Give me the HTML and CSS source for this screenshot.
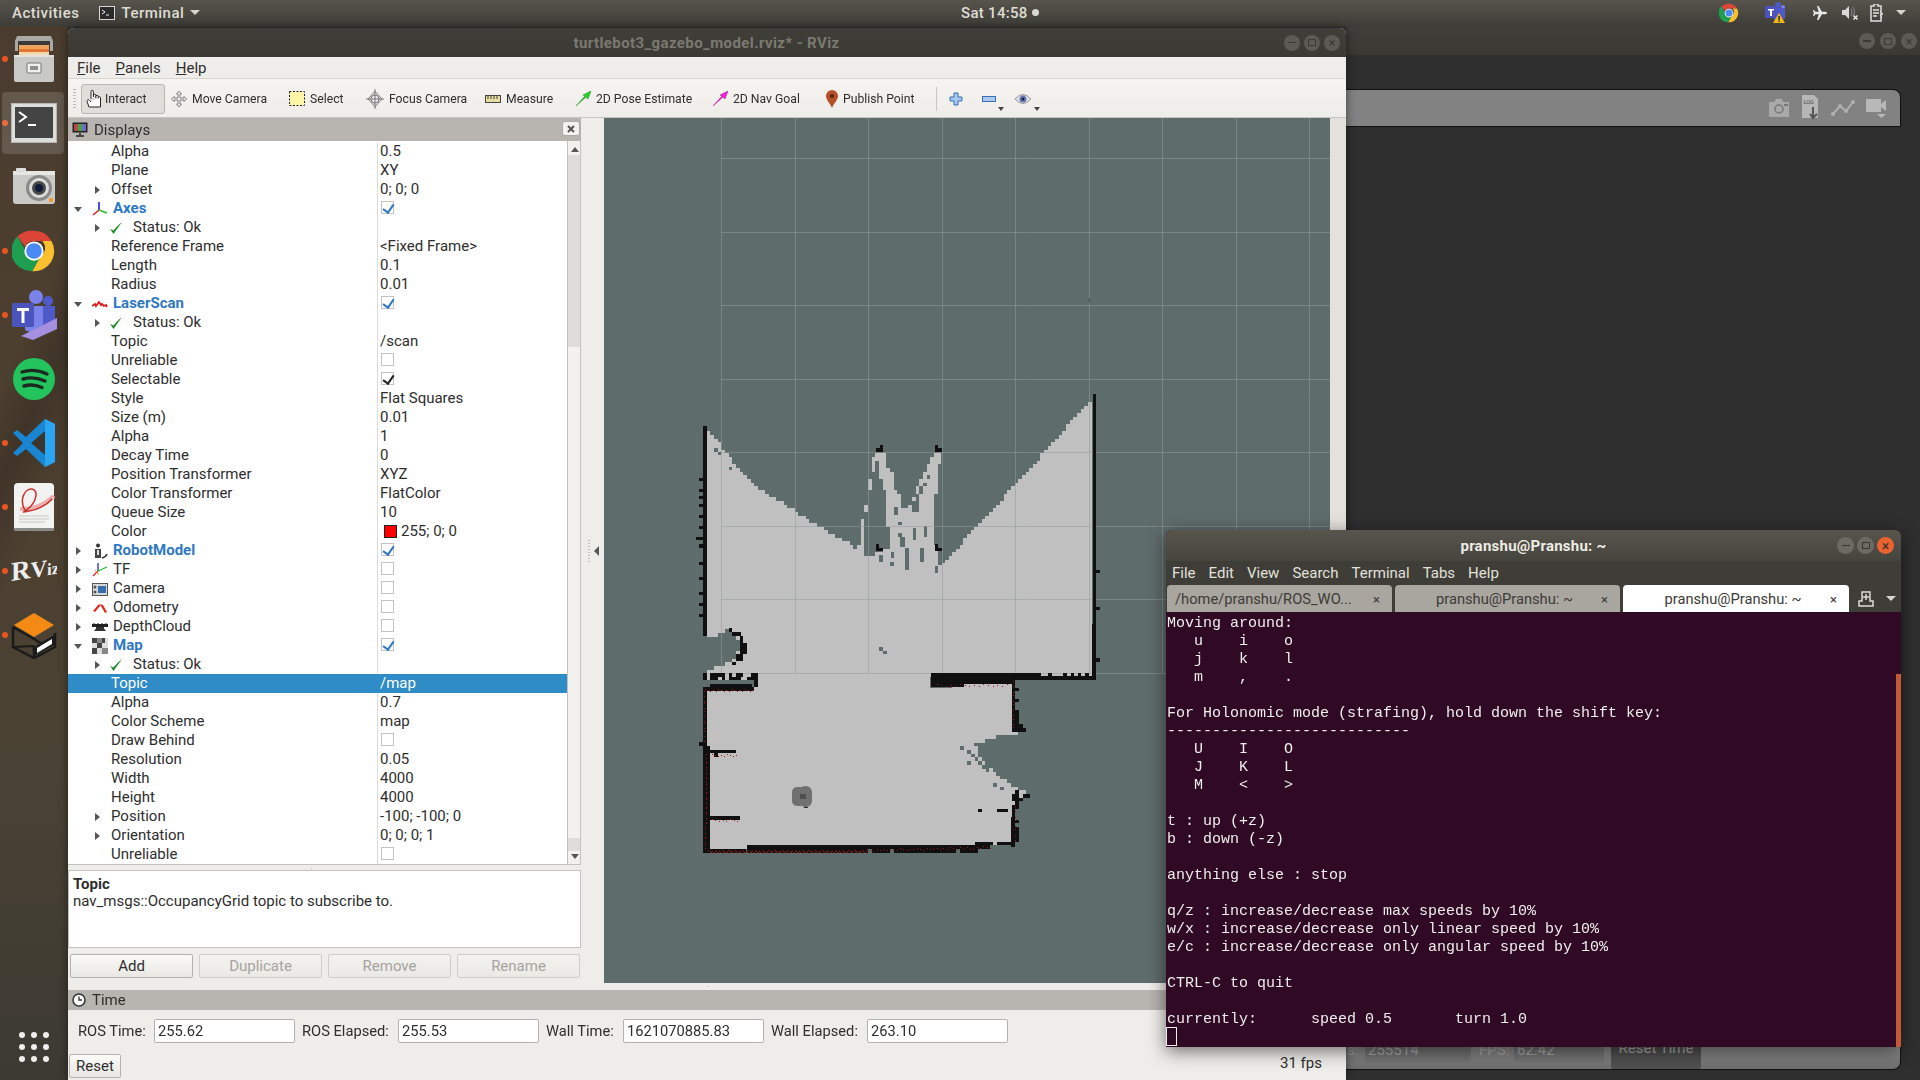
FILE: index.html
```html
<!DOCTYPE html>
<html lang="en">
<head>
  <meta charset="UTF-8" />
  <title>turtlebot3_gazebo_model.rviz* - RViz</title>
  <link rel="stylesheet" href="styles.css">
</head>
<body>
  <!-- Top panel -->
  <header class="topbar">
    <span class="activities">Activities</span>
    <span class="app-menu">
      <svg width="16" height="14" viewBox="0 0 16 14"><rect x="0.5" y="0.5" width="15" height="13" fill="#2b2b2b" stroke="#d8d8d8"/><path d="M3 4l3 2-3 2M7 9h3" fill="none" stroke="#eee"/></svg>
      Terminal
      <i class="caret"></i>
    </span>
    <span class="clock">Sat 14:58 <i class="clock-dot"></i></span>
    <div class="tray">
      <svg class="tray-chrome" width="20" height="20" viewBox="0 0 48 48"><use href="#chrome"/></svg>
      <svg class="tray-teams" width="22" height="22" viewBox="0 0 22 22">
        <circle cx="14" cy="3" r="3" fill="#5059c9"/><circle cx="19" cy="5" r="2" fill="#7b83eb"/>
        <path d="M10 6h11v10l-5 5-6-3z" fill="#5059c9"/>
        <rect x="1" y="4" width="11" height="12" fill="#4b53bc"/>
        <path d="M4 7h6v1.500H8V14H6V8.500H4z" fill="#fff"/>
        <path d="M15 11l6 10H9z" fill="#f5b915"/><rect x="14.400" y="14" width="1.400" height="4" fill="#222"/><rect x="14.400" y="18.600" width="1.400" height="1.400" fill="#222"/>
      </svg>
      <svg class="tray-plane" width="16" height="16" viewBox="0 0 16 16"><path d="M15 8c0-.8-1-1.200-2-1.200H10L6.500 1H5l1.700 5.800H3.500L2 5H1l.8 3L1 11h1l1.500-1.800h3.200L5 15h1.500L10 9.200h3C14 9.200 15 8.800 15 8z" fill="#e8e8e8"/></svg>
      <svg class="tray-sound" width="18" height="16" viewBox="0 0 18 16"><path d="M1 5h3l4-4v13l-4-4H1z" fill="#d8d8d8"/><path d="M10 4q2 3.500 0 7M12 2q3 5.500 0 10" fill="none" stroke="#777" stroke-width="1.300"/><path d="M12.500 10.500l4 4m0-4l-4 4" stroke="#e8e8e8" stroke-width="1.500"/></svg>
      <svg class="tray-batt" width="14" height="18" viewBox="0 0 14 18"><path d="M4 0h4v2h3v15H1V2h3z" fill="none" stroke="#e0e0e0" stroke-width="1.500"/><path d="M3 6h6M3 9h6M3 12h4" stroke="#e0e0e0" stroke-width="1.500"/><path d="M10 7l3 3-3 1 2 3" fill="none" stroke="#e0e0e0"/></svg>
      <i class="caret tray-caret"></i>
    </div>
  </header>

  <div class="screen">
    <!-- Dock -->
    <aside class="dock">
      <div class="dock-item running">
        <svg width="42" height="48" viewBox="0 0 42 48">
          <path d="M4 1h34l2 5v10H2V6z" fill="#a9a9a6"/><rect x="5" y="6" width="32" height="14" fill="#3b3a38"/>
          <rect x="6" y="10" width="30" height="4" fill="#f0a35e"/><rect x="6" y="14" width="30" height="3" fill="#e2762f"/><rect x="6" y="17" width="30" height="3" fill="#f4d9b0"/>
          <rect x="1" y="20" width="40" height="27" rx="2" fill="#c9c9c6"/><rect x="1" y="20" width="40" height="2" fill="#e3e3e0"/>
          <rect x="14" y="28" width="14" height="10" rx="1" fill="#efefec" stroke="#777"/><rect x="17" y="31" width="8" height="4" fill="#8f8f8c"/>
        </svg>
      </div>
      <div class="dock-item running active">
        <svg width="46" height="40" viewBox="0 0 46 40">
          <rect x="0.500" y="0.500" width="45" height="39" fill="#d8d8d6" stroke="#aaa"/><rect x="4" y="4" width="38" height="31" fill="#262626"/>
          <path d="M8 9l7 5-7 5M17 22h8" fill="none" stroke="#fff" stroke-width="2"/>
        </svg>
      </div>
      <div class="dock-item">
        <svg width="44" height="38" viewBox="0 0 44 38">
          <rect x="1" y="3" width="42" height="33" rx="3" fill="#c9c9c6"/><rect x="1" y="3" width="42" height="4" fill="#e6e6e3"/><rect x="4" y="0" width="10" height="4" rx="1" fill="#ddd"/>
          <circle cx="27" cy="20" r="13" fill="#8a8a88"/><circle cx="27" cy="20" r="10" fill="#dcdcda"/><circle cx="27" cy="20" r="7" fill="#4a4a4a"/><circle cx="27" cy="20" r="4" fill="#111c3a"/>
          <rect x="37" y="30" width="4" height="4" fill="#ef9a2b"/>
        </svg>
      </div>
      <div class="dock-item running">
        <svg width="44" height="44" viewBox="0 0 48 48" id="chrome-dock">
          <g id="chrome">
            <path d="M24 2a22 22 0 0 1 19 11H24a11 11 0 0 0-10 6L6 8A22 22 0 0 1 24 2z" fill="#db4437"/>
            <path d="M43 13a22 22 0 0 1-21 33l9-16a11 11 0 0 0 2-17z" fill="#fbc02d"/>
            <path d="M6 8l9 16a11 11 0 0 0 16 6l-9 16A22 22 0 0 1 6 8z" fill="#1e9e50"/>
            <circle cx="24" cy="24" r="10.500" fill="#fff"/><circle cx="24" cy="24" r="8.500" fill="#4a8af4"/>
          </g>
        </svg>
      </div>
      <div class="dock-item running">
        <svg width="46" height="50" viewBox="0 0 46 50">
          <circle cx="25" cy="7" r="7" fill="#7b83eb"/><circle cx="37" cy="11" r="5" fill="#5059c9"/>
          <path d="M14 16h18v22l-8 6-10-4z" fill="#7b83eb"/><path d="M32 16h12v18l-12 8z" fill="#5059c9"/>
          <path d="M10 46l36-18v11l-24 11z" fill="#a48fe0"/>
          <rect x="1" y="13" width="22" height="24" rx="2" fill="#4b53bc"/><path d="M6 18h12v3h-4.500v12h-3V21H6z" fill="#fff"/>
        </svg>
      </div>
      <div class="dock-item">
        <svg width="44" height="44" viewBox="0 0 44 44">
          <circle cx="22" cy="22" r="21" fill="#23c45d"/>
          <path d="M10 15q12-4 25 2M11 22q11-3 22 2M12 29q9-2.500 18 1.500" fill="none" stroke="#1b2b20" stroke-width="3.400" stroke-linecap="round"/>
        </svg>
      </div>
      <div class="dock-item running">
        <svg width="44" height="50" viewBox="0 0 44 50">
          <path d="M33 1l10 5v38l-10 5-19-18-9 7-4-3 10-10L1 15l4-3 9 7z" fill="#1a85d1"/>
          <path d="M33 1l10 5v38l-10 5z" fill="#29a5f2"/><path d="M33 13L19 25l14 12z" fill="#3c3630"/>
        </svg>
      </div>
      <div class="dock-item running">
        <svg width="42" height="50" viewBox="0 0 42 50">
          <rect x="1" y="1" width="40" height="48" rx="4" fill="#f2f2f0"/><rect x="1" y="46" width="40" height="3" rx="1" fill="#8a8a88"/>
          <path d="M41 14Q26 28 7 27" fill="none" stroke="#ecaeae" stroke-width="4"/>
          <path d="M13 30C5 18 12 6 19 7s4 13-3 19-8 4 0 3 18-6 23-12" fill="none" stroke="#c8322c" stroke-width="1.500"/>
          <path d="M6 34h30M6 37h30M6 40h26" stroke="#c6c6c4"/>
        </svg>
      </div>
      <div class="dock-item running">
        <svg width="46" height="36" viewBox="0 0 46 36"><text class="rviz-logo" transform="translate(0 28) skewY(-9)">R<tspan class="rviz-mid">V</tspan><tspan class="rviz-small">iz</tspan></text></svg>
      </div>
      <div class="dock-item running">
        <svg width="48" height="48" viewBox="0 0 48 48">
          <path d="M24 2l20 12-20 12L4 14z" fill="#f28a14"/>
          <path d="M3 16v20l21 11 21-11V22" fill="none" stroke="#1b1b1b" stroke-width="2.500"/><path d="M3 16l21 12 8 5" fill="none" stroke="#1b1b1b" stroke-width="2.500"/>
          <path d="M24 47l-.5-12L3 36" fill="none" stroke="#1b1b1b" stroke-width="2"/>
          <path d="M24 36l20-12v10L24 45z" fill="#1b1b1b"/><path d="M27 37l15-9v5l-15 9z" fill="#fff"/>
        </svg>
      </div>
      <div class="dock-apps">
        <i></i><i></i><i></i><i></i><i></i><i></i><i></i><i></i><i></i>
      </div>
    </aside>

    <main class="desktop">
      <!-- Gazebo window behind -->
      <section class="gazebo">
        <div class="gz-title">
          <span class="wbtn"><b class="wb-min"></b></span>
          <span class="wbtn"><b class="wb-max"></b></span>
          <span class="wbtn wb-x">×</span>
        </div>
        <div class="gz-toolbar">
          <svg width="24" height="20" viewBox="0 0 24 20"><path d="M2 4h5l2-3h6l1 3h6v15H2z" fill="#a9a9a9"/><circle cx="12" cy="11" r="4" fill="none" stroke="#777" stroke-width="1.500"/><rect x="17" y="6" width="4" height="2" fill="#777"/></svg>
          <svg class="gz-log" width="20" height="26" viewBox="0 0 20 26"><path d="M1 0h12l4 4v19H1z" fill="#b6b6b6"/><text x="2.500" y="9" class="gz-log-text">LOG</text><path d="M12 12v10m-3-3l3 4 4-4" fill="none" stroke="#555" stroke-width="2"/></svg>
          <svg width="24" height="16" viewBox="0 0 24 16"><path d="M2 14l7-8 6 5 7-9" fill="none" stroke="#b0b0b0" stroke-width="2"/><circle cx="2" cy="14" r="2" fill="#b0b0b0"/><circle cx="9" cy="6" r="2" fill="#b0b0b0"/><circle cx="15" cy="11" r="2" fill="#b0b0b0"/><circle cx="22" cy="2" r="2" fill="#b0b0b0"/></svg>
          <svg width="24" height="22" viewBox="0 0 24 22"><rect x="1" y="2" width="15" height="13" fill="#b8b8b8"/><path d="M16 7l5-4v11l-5-4zM12 17h9l-4.500 4z" fill="#b8b8b8"/></svg>
        </div>
        <div class="gz-bottom">
          <span class="gz-s">s:</span><span class="gz-field">255514</span>
          <span class="gz-label">FPS:</span><span class="gz-field gz-fps">62.42</span>
          <span class="gz-reset">Reset Time</span>
        </div>
      </section>

      <!-- RViz window -->
      <section class="rviz">
        <div class="rv-title">
          <span class="rv-title-text">turtlebot3_gazebo_model.rviz* - RViz</span>
          <span class="rv-btns">
            <span class="wbtn"><b class="wb-min"></b></span>
            <span class="wbtn"><b class="wb-max"></b></span>
            <span class="wbtn wb-x">×</span>
          </span>
        </div>
        <nav class="menubar">
          <span><u>F</u>ile</span><span><u>P</u>anels</span><span><u>H</u>elp</span>
        </nav>
        <div class="toolbar">
          <i class="tb-grip"></i>
          <div class="tool tool-on">
            <svg width="16" height="20" viewBox="0 0 16 20"><path d="M5 10V2.500a1.200 1.200 0 0 1 2.400 0V8m0-1.500a1.200 1.200 0 0 1 2.400 0V9m0-1.500a1.200 1.200 0 0 1 2.400 0V9.500m0-1a1.200 1.200 0 0 1 2.300 0V18H3L1 12.500c-.5-1.500 1.500-2.500 2.500-1L5 13" fill="#fff" stroke="#222"/></svg>
            Interact
          </div>
          <div class="tool">
            <svg width="16" height="18" viewBox="0 0 16 18"><path d="M8 1l2.500 3H9v4h4V6.500L15.500 9 13 11.500V10H9v4h1.500L8 17l-2.500-3H7v-4H3v1.500L.5 9 3 6.500V8h4V4H5.500z" fill="#eee" stroke="#666" stroke-width=".8"/></svg>
            Move Camera
          </div>
          <div class="tool">
            <svg width="16" height="15" viewBox="0 0 16 15"><rect x=".5" y=".5" width="15" height="14" fill="#fdf5a8" stroke="#222" stroke-dasharray="2 1.500"/></svg>
            Select
          </div>
          <div class="tool">
            <svg width="18" height="20" viewBox="0 0 18 20"><path d="M9 2l7 8-7 8-7-8z" fill="#ddd" stroke="#888"/><circle cx="9" cy="10" r="4" fill="#eee" stroke="#777"/><path d="M9 0v20M0 10h18" stroke="#777"/></svg>
            Focus Camera
          </div>
          <div class="tool">
            <svg width="16" height="8" viewBox="0 0 16 8"><rect x=".5" y=".5" width="15" height="7" fill="#e8dca0" stroke="#444"/><path d="M3 1v3M6 1v3M9 1v3M12 1v3" stroke="#444"/></svg>
            Measure
          </div>
          <div class="tool">
            <svg width="16" height="16" viewBox="0 0 16 16"><path d="M1 15L10 5 8 4l8-4-3 8-2-2z" fill="#25d32a" stroke="#14801a" stroke-width=".5"/></svg>
            2D Pose Estimate
          </div>
          <div class="tool">
            <svg width="16" height="16" viewBox="0 0 16 16"><path d="M1 15L10 5 8 4l8-4-3 8-2-2z" fill="#f022d8" stroke="#a5108f" stroke-width=".5"/></svg>
            2D Nav Goal
          </div>
          <div class="tool tool-pin">
            <svg width="12" height="18" viewBox="0 0 12 18"><path d="M6 18C4 13 0 10 0 6a6 6 0 0 1 12 0c0 4-4 7-6 12z" fill="#b5502a"/><circle cx="6" cy="6" r="2" fill="#5a2410"/></svg>
            Publish Point
          </div>
          <i class="tb-sep"></i>
          <svg class="tb-plus" width="14" height="14" viewBox="0 0 14 14"><path d="M5 1h4v4h4v4H9v4H5V9H1V5h4z" fill="#a8c8ee" stroke="#3a6db0"/></svg>
          <svg class="tb-minus" width="14" height="6" viewBox="0 0 14 6"><rect x=".5" y=".5" width="13" height="5" fill="#a8c8ee" stroke="#3a6db0"/></svg>
          <i class="tb-drop tb-drop1"></i>
          <svg class="tb-eye" width="16" height="12" viewBox="0 0 16 12"><path d="M0 6q8-9 16 0-8 9-16 0z" fill="#e2e2e8" stroke="#999"/><circle cx="8" cy="6" r="3.500" fill="#6878b0"/><circle cx="8" cy="6" r="1.500" fill="#1a2040"/></svg>
          <i class="tb-drop tb-drop2"></i>
        </div>

        <div class="rv-main">
          <div class="left">
            <div class="panel-head">
              <svg width="16" height="15" viewBox="0 0 16 15"><rect x=".5" y=".5" width="15" height="10" fill="#222"/><rect x="2" y="2" width="4" height="7" fill="#b34a4a"/><rect x="6" y="2" width="4" height="7" fill="#4aa04f"/><rect x="10" y="2" width="4" height="7" fill="#6e6ec0"/><path d="M8 11v2M4 14h8" stroke="#222" stroke-width="1.500"/></svg>
              <span>Displays</span>
              <span class="panel-close">
                <svg width="8" height="8" viewBox="0 0 8 8"><path d="M1 1l6 6m0-6L1 7" stroke="#555" stroke-width="2"/></svg>
              </span>
            </div>
            <div class="tree-wrap">
              <div class="tree">
                <div class="row"><div class="name l1"><i class="exp"></i><span class="lbl">Alpha</span></div><div class="val">0.5</div></div>
                <div class="row"><div class="name l1"><i class="exp"></i><span class="lbl">Plane</span></div><div class="val">XY</div></div>
                <div class="row"><div class="name l1"><i class="exp shut"></i><span class="lbl">Offset</span></div><div class="val">0; 0; 0</div></div>
                <div class="row"><div class="name l0"><i class="exp open"></i>
                  <svg class="ic" width="16" height="16" viewBox="0 0 16 16"><path d="M7 9V1" stroke="#2222dd" stroke-width="1.600"/><path d="M7 9l-6 5" stroke="#e02020" stroke-width="1.600"/><path d="M7 9l8 3" stroke="#20c030" stroke-width="1.600"/></svg>
                  <span class="lbl blue">Axes</span></div><div class="val"><i class="cb on"></i></div></div>
                <div class="row"><div class="name l1"><i class="exp shut"></i><svg class="ok" width="14" height="14" viewBox="0 0 14 14"><path d="M1 8l3.500 5L13 1C8 5 6 8 4.500 9.500z" fill="#208a2c"/></svg><span class="lbl st">Status: Ok</span></div><div class="val"></div></div>
                <div class="row"><div class="name l1"><i class="exp"></i><span class="lbl">Reference Frame</span></div><div class="val">&lt;Fixed Frame&gt;</div></div>
                <div class="row"><div class="name l1"><i class="exp"></i><span class="lbl">Length</span></div><div class="val">0.1</div></div>
                <div class="row"><div class="name l1"><i class="exp"></i><span class="lbl">Radius</span></div><div class="val">0.01</div></div>
                <div class="row"><div class="name l0"><i class="exp open"></i>
                  <svg class="ic" width="16" height="16" viewBox="0 0 16 16"><path d="M0 10l3-2 1 2 3-4 2 3 1-1 2 2 2-1 1 2" fill="none" stroke="#e01818" stroke-width="1.800"/></svg>
                  <span class="lbl blue">LaserScan</span></div><div class="val"><i class="cb on"></i></div></div>
                <div class="row"><div class="name l1"><i class="exp shut"></i><svg class="ok" width="14" height="14" viewBox="0 0 14 14"><path d="M1 8l3.500 5L13 1C8 5 6 8 4.500 9.500z" fill="#208a2c"/></svg><span class="lbl st">Status: Ok</span></div><div class="val"></div></div>
                <div class="row"><div class="name l1"><i class="exp"></i><span class="lbl">Topic</span></div><div class="val">/scan</div></div>
                <div class="row"><div class="name l1"><i class="exp"></i><span class="lbl">Unreliable</span></div><div class="val"><i class="cb"></i></div></div>
                <div class="row"><div class="name l1"><i class="exp"></i><span class="lbl">Selectable</span></div><div class="val"><i class="cb on dark"></i></div></div>
                <div class="row"><div class="name l1"><i class="exp"></i><span class="lbl">Style</span></div><div class="val">Flat Squares</div></div>
                <div class="row"><div class="name l1"><i class="exp"></i><span class="lbl">Size (m)</span></div><div class="val">0.01</div></div>
                <div class="row"><div class="name l1"><i class="exp"></i><span class="lbl">Alpha</span></div><div class="val">1</div></div>
                <div class="row"><div class="name l1"><i class="exp"></i><span class="lbl">Decay Time</span></div><div class="val">0</div></div>
                <div class="row"><div class="name l1"><i class="exp"></i><span class="lbl">Position Transformer</span></div><div class="val">XYZ</div></div>
                <div class="row"><div class="name l1"><i class="exp"></i><span class="lbl">Color Transformer</span></div><div class="val">FlatColor</div></div>
                <div class="row"><div class="name l1"><i class="exp"></i><span class="lbl">Queue Size</span></div><div class="val">10</div></div>
                <div class="row"><div class="name l1"><i class="exp"></i><span class="lbl">Color</span></div><div class="val"><i class="swatch"></i>255; 0; 0</div></div>
                <div class="row"><div class="name l0"><i class="exp shut"></i>
                  <svg class="ic" width="16" height="16" viewBox="0 0 16 16"><circle cx="6" cy="2.500" r="2" fill="#333"/><rect x="3" y="6" width="6" height="9" fill="#444"/><rect x="5" y="7" width="2" height="5" fill="#ddd"/><path d="M10 15q4-1 5-4" fill="none" stroke="#333" stroke-width="1.500"/></svg>
                  <span class="lbl blue">RobotModel</span></div><div class="val"><i class="cb on"></i></div></div>
                <div class="row"><div class="name l0"><i class="exp shut"></i>
                  <svg class="ic" width="16" height="16" viewBox="0 0 16 16"><path d="M6 9V1" stroke="#2222dd" stroke-width="1.300"/><path d="M6 9l-5 5" stroke="#e02020" stroke-width="1.300"/><path d="M6 9l9-4" stroke="#20c030" stroke-width="1.300"/><path d="M3 8l4 5" stroke="#e0a020"/></svg>
                  <span class="lbl">TF</span></div><div class="val"><i class="cb"></i></div></div>
                <div class="row"><div class="name l0"><i class="exp shut"></i>
                  <svg class="ic" width="16" height="16" viewBox="0 0 16 16"><rect x=".5" y="2.500" width="15" height="12" fill="#d8d8d8" stroke="#555"/><rect x="6" y="5" width="8" height="7" fill="#3a6db0"/><circle cx="3" cy="6" r="1.500" fill="#555"/><circle cx="3" cy="11" r="1.500" fill="#555"/></svg>
                  <span class="lbl">Camera</span></div><div class="val"><i class="cb"></i></div></div>
                <div class="row"><div class="name l0"><i class="exp shut"></i>
                  <svg class="ic" width="16" height="16" viewBox="0 0 16 16"><path d="M1 11l6-7 1.500 1.500L3 12zM8 4l3 1 4 7-2 1-3.500-6" fill="#e02a20"/></svg>
                  <span class="lbl">Odometry</span></div><div class="val"><i class="cb"></i></div></div>
                <div class="row"><div class="name l0"><i class="exp shut"></i>
                  <svg class="ic" width="16" height="16" viewBox="0 0 16 16"><rect x="0" y="5" width="16" height="3" fill="#222"/><path d="M4 8h8v1.500l2 2.500H2l2-2.500z" fill="#333"/><path d="M2 5V4M6 5V4M10 5V4M14 5V4" stroke="#222"/></svg>
                  <span class="lbl">DepthCloud</span></div><div class="val"><i class="cb"></i></div></div>
                <div class="row"><div class="name l0"><i class="exp open"></i>
                  <svg class="ic" width="16" height="16" viewBox="0 0 16 16"><rect width="16" height="16" fill="#ddd"/><path d="M0 0h5v5H0zM5 5h5v5H5zM10 0h3v5h-3zM0 10h5v6H0z" fill="#444"/><path d="M5 0h5v5H5zM10 10h6v6h-6z" fill="#888"/></svg>
                  <span class="lbl blue">Map</span></div><div class="val"><i class="cb on"></i></div></div>
                <div class="row"><div class="name l1"><i class="exp shut"></i><svg class="ok" width="14" height="14" viewBox="0 0 14 14"><path d="M1 8l3.500 5L13 1C8 5 6 8 4.500 9.500z" fill="#208a2c"/></svg><span class="lbl st">Status: Ok</span></div><div class="val"></div></div>
                <div class="row selected"><div class="name l1"><i class="exp"></i><span class="lbl">Topic</span></div><div class="val">/map</div></div>
                <div class="row"><div class="name l1"><i class="exp"></i><span class="lbl">Alpha</span></div><div class="val">0.7</div></div>
                <div class="row"><div class="name l1"><i class="exp"></i><span class="lbl">Color Scheme</span></div><div class="val">map</div></div>
                <div class="row"><div class="name l1"><i class="exp"></i><span class="lbl">Draw Behind</span></div><div class="val"><i class="cb"></i></div></div>
                <div class="row"><div class="name l1"><i class="exp"></i><span class="lbl">Resolution</span></div><div class="val">0.05</div></div>
                <div class="row"><div class="name l1"><i class="exp"></i><span class="lbl">Width</span></div><div class="val">4000</div></div>
                <div class="row"><div class="name l1"><i class="exp"></i><span class="lbl">Height</span></div><div class="val">4000</div></div>
                <div class="row"><div class="name l1"><i class="exp shut"></i><span class="lbl">Position</span></div><div class="val">-100; -100; 0</div></div>
                <div class="row"><div class="name l1"><i class="exp shut"></i><span class="lbl">Orientation</span></div><div class="val">0; 0; 0; 1</div></div>
                <div class="row"><div class="name l1"><i class="exp"></i><span class="lbl">Unreliable</span></div><div class="val"><i class="cb"></i></div></div>
              </div>
              <div class="scrollbar">
                <i class="sb-up"></i>
                <i class="sb-thumb"></i>
                <i class="sb-thumb2"></i>
                <i class="sb-down"></i>
              </div>
            </div>
            <div class="grip-h"></div>
            <div class="desc">
              <b>Topic</b><br>
              nav_msgs::OccupancyGrid topic to subscribe to.
            </div>
            <div class="btn-row">
              <button>Add</button>
              <button disabled>Duplicate</button>
              <button disabled>Remove</button>
              <button disabled>Rename</button>
            </div>
          </div>
          <div class="split"><i class="split-dots"></i><i class="split-arrow"></i></div>
          <canvas id="view" width="726" height="865"></canvas>
          <div class="right-strip"></div>
        </div>

        <div class="grip-v"></div>
        <div class="panel-head time-head">
          <svg width="14" height="14" viewBox="0 0 14 14"><circle cx="7" cy="7" r="6" fill="#fff" stroke="#333" stroke-width="1.500"/><path d="M7 3.500V7h3" fill="none" stroke="#333" stroke-width="1.300"/></svg>
          <span>Time</span>
        </div>
        <div class="time-row">
          <label class="lbl-s">ROS Time:</label><input value="255.62" readonly>
          <label class="lbl-l">ROS Elapsed:</label><input value="255.53" readonly>
          <label class="lbl-w">Wall Time:</label><input value="1621070885.83" readonly>
          <label class="lbl-l">Wall Elapsed:</label><input value="263.10" readonly>
        </div>
        <div class="reset-row">
          <button>Reset</button>
          <span class="fps">31 fps</span>
        </div>
      </section>

      <!-- Terminal window -->
      <section class="term">
        <div class="term-title">
          <span>pranshu@Pranshu: ~</span>
          <span class="term-btns">
            <span class="tbtn"><b class="wb-min"></b></span>
            <span class="tbtn"><b class="wb-max"></b></span>
            <span class="tbtn tbtn-x">×</span>
          </span>
        </div>
        <nav class="term-menu">
          <span>File</span><span>Edit</span><span>View</span><span>Search</span><span>Terminal</span><span>Tabs</span><span>Help</span>
        </nav>
        <div class="term-tabs">
          <div class="tab tab-path">/home/pranshu/ROS_WO...<span class="tab-x">×</span></div>
          <div class="tab">pranshu@Pranshu: ~<span class="tab-x">×</span></div>
          <div class="tab tab-on">pranshu@Pranshu: ~<span class="tab-x">×</span></div>
          <svg class="tab-new" width="16" height="16" viewBox="0 0 16 16"><path d="M4 1h8v9h3v5H1v-5h3z" fill="none" stroke="#dedbd5" stroke-width="1.500"/><path d="M8 3v6M5 6h6" stroke="#dedbd5" stroke-width="1.500"/></svg>
          <i class="caret tab-caret"></i>
        </div>
        <div class="term-body">
<pre>Moving around:
   u    i    o
   j    k    l
   m    ,    .

For Holonomic mode (strafing), hold down the shift key:
---------------------------
   U    I    O
   J    K    L
   M    &lt;    &gt;

t : up (+z)
b : down (-z)

anything else : stop

q/z : increase/decrease max speeds by 10%
w/x : increase/decrease only linear speed by 10%
e/c : increase/decrease only angular speed by 10%

CTRL-C to quit

currently:      speed 0.5       turn 1.0 
</pre>
          <i class="cursor"></i>
          <i class="term-scroll"></i>
        </div>
      </section>
    </main>
  </div>

  <script src="map.js"></script>
</body>
</html>
```

FILE: styles.css
```css
:root {
  --ui-font: Roboto, sans-serif;
  --win-bg: #efedE9;
  --panel-head: #b8b4b0;
  --text: #2e2e2e;
  --blue: #2f78c4;
  --select: #308cc6;
  --border: #c4c2be;
}

* {
  box-sizing: border-box;
  margin: 0;
  padding: 0;
}

i { font-style: normal; display: block; }

body {
  width: 1920px;
  height: 1080px;
  overflow: hidden;
  background: #2f2f2f;
  font-family: var(--ui-font);
  font-size: 15px;
  color: var(--text);
}

/* top panel */
.topbar {
  height: 27px;
  padding-bottom: 2px;
  background: linear-gradient(to bottom, #57544b, #3d3c37);
  color: #dfdcd4;
  font-weight: 500;
  font-size: 15px;
  display: flex;
  align-items: center;
  position: relative;
}

.activities { margin-left: 12px; letter-spacing: .5px; }

.app-menu {
  display: flex;
  align-items: center;
  gap: 6px;
  margin-left: 20px;
  letter-spacing: .5px;
}

.caret {
  width: 0;
  height: 0;
  border-left: 5px solid transparent;
  border-right: 5px solid transparent;
  border-top: 5px solid #d8d6d0;
}

.clock {
  position: absolute;
  left: 961px;
  display: flex;
  align-items: center;
  gap: 4px;
  letter-spacing: .3px;
}

.clock-dot {
  width: 7px;
  height: 7px;
  border-radius: 50%;
  background: #d8d6d0;
}

.tray {
  margin-left: auto;
  display: flex;
  align-items: center;
  padding-right: 14px;
}

.tray-teams { margin-left: 25px; }
.tray-plane { margin-left: 26px; }
.tray-sound { margin-left: 13px; }
.tray-batt { margin-left: 11px; }
.tray-caret { margin-left: 12px; }

.screen {
  display: flex;
  height: 1053px;
}

/* launcher */
.dock {
  width: 68px;
  flex: none;
  display: flex;
  flex-direction: column;
  background:
    linear-gradient(115deg, rgba(0,0,0,0) 30%, rgba(0,0,0,.18) 38%, rgba(0,0,0,0) 48%),
    linear-gradient(to bottom, #4a3d2f 0%, #4d4030 45%, #4a4234 70%, #3c3a33 100%);
}

.dock-item {
  height: 64px;
  display: flex;
  align-items: center;
  justify-content: center;
  position: relative;
}

.dock-item.running::before {
  content: "";
  position: absolute;
  left: 2px;
  top: 29px;
  width: 6px;
  height: 6px;
  border-radius: 50%;
  background: #e95420;
}

.dock-item.active::after {
  content: "";
  position: absolute;
  left: 2px;
  top: 1px;
  width: 62px;
  height: 62px;
  border-radius: 4px;
  background: rgba(255,255,255,.14);
}

.rviz-logo {
  font-family: "Liberation Serif", serif;
  font-weight: bold;
  font-size: 27px;
  fill: #eee;
}

.rviz-mid { font-size: 23px; }
.rviz-small { font-size: 17px; }

.dock-apps {
  margin-top: auto;
  height: 64px;
  margin-bottom: 1px;
  display: grid;
  grid-template-columns: repeat(3, 6px);
  gap: 6px;
  justify-content: center;
  align-content: center;
}

.dock-apps i {
  width: 6px;
  height: 6px;
  border-radius: 50%;
  background: #eee;
}

/* free canvas for the windows */
.desktop {
  position: relative;
  flex: 1;
}

/* window behind */
.gazebo {
  position: absolute;
  left: 1278px;
  right: 0;
  top: 0;
  bottom: 0;
  background: #2f2f2f;
}

.gz-title {
  height: 28px;
  background: linear-gradient(to bottom, #3f3e39, #393833);
  display: flex;
  justify-content: flex-end;
  align-items: center;
  gap: 5px;
  padding-right: 3px;
}

.wbtn {
  width: 16px;
  height: 16px;
  border-radius: 50%;
  background: #5b5a54;
  color: #3a3934;
  display: flex;
  align-items: center;
  justify-content: center;
  font-size: 13px;
  line-height: 1;
}

.wb-min { width: 8px; height: 1.5px; background: currentColor; display: block; }
.wb-max { width: 8px; height: 7px; border: 1.5px solid currentColor; display: block; }

.gz-toolbar {
  position: absolute;
  top: 62px;
  left: 0;
  width: 555px;
  height: 38px;
  background: #828282;
  border: 1px solid #111;
  border-width: 1px 1px 1px 0;
  border-top-right-radius: 8px;
  display: flex;
  justify-content: flex-end;
  align-items: center;
  gap: 10px;
  padding-right: 11px;
}

.gz-log-text {
  font-family: var(--ui-font);
  font-size: 5.500px;
  fill: #444;
}

.gz-bottom {
  position: absolute;
  top: 1003px;
  left: 0;
  width: 555px;
  height: 40px;
  background: linear-gradient(to bottom, #7a7a7a, #8a8a8a 50%, #6e6e6e);
  border-bottom-right-radius: 8px;
  border: 1px solid #111;
  border-width: 0 1px 1px 0;
  color: #a9a9a9;
  display: flex;
  align-items: center;
  gap: 8px;
}

.gz-s { width: 10px; margin-left: 1px; }
.gz-label { width: 27px; }

.gz-field {
  background: #737373;
  border-radius: 3px;
  width: 106px;
  height: 26px;
  line-height: 26px;
  padding-left: 3px;
}

.gz-fps { width: 90px; }

.gz-reset {
  background: #4f4f4f;
  border-radius: 3px;
  width: 90px;
  height: 32px;
  line-height: 23px;
  text-align: center;
  margin: 6px 0 0 -1px;
}

/* rviz window */
.rviz {
  position: absolute;
  left: 0;
  top: 1px;
  width: 1278px;
  height: 1052px;
  background: var(--win-bg);
  display: flex;
  flex-direction: column;
  box-shadow: 0 0 10px rgba(0,0,0,.5);
  border-radius: 6px 6px 0 0;
}

.rv-title {
  height: 29px;
  flex: none;
  background: linear-gradient(to bottom, #3f3e39, #3a3934);
  border-radius: 6px 6px 0 0;
  display: flex;
  align-items: center;
  justify-content: center;
  position: relative;
}

.rv-title-text {
  color: #7b7970;
  font-weight: bold;
  font-size: 15px;
  letter-spacing: .4px;
  margin-right: 1px;
}

.rv-btns {
  position: absolute;
  right: 6px;
  display: flex;
  gap: 4px;
}

.menubar {
  height: 22px;
  flex: none;
  display: flex;
  align-items: center;
  gap: 15px;
  padding: 1px 0 0 9px;
  border-bottom: 1px solid #d8d6d2;
}

.toolbar {
  height: 39px;
  flex: none;
  padding-top: 1px;
  background: linear-gradient(to bottom, #f6f4f1, #efedE9);
  border-bottom: 1px solid #c8c6c2;
  display: flex;
  align-items: center;
  position: relative;
  font-size: 12.2px;
}

.tb-grip {
  width: 3px;
  height: 20px;
  margin-left: 5px;
  margin-right: 5px;
  background: repeating-linear-gradient(to bottom, #bbb 0 1px, transparent 1px 3px);
}

.tool {
  display: flex;
  align-items: center;
  gap: 5px;
  flex: none;
  height: 30px;
}

.tool:nth-of-type(1) { width: 90px; }
.tool:nth-of-type(2) { width: 118px; }
.tool:nth-of-type(3) { width: 77px; }
.tool:nth-of-type(4) { width: 119px; }
.tool:nth-of-type(5) { width: 90px; }
.tool:nth-of-type(6) { width: 137px; }
.tool:nth-of-type(7) { width: 114px; }
.tool:nth-of-type(8) { width: 110px; }

.tool-on {
  background: #e0dedb;
  border: 1px solid #b9b5b0;
  border-radius: 3px;
  padding-left: 4px;
  gap: 3px;
  margin-right: 6px;
  width: 84px !important;
}

.tb-sep {
  width: 1px;
  height: 24px;
  background: #c8c6c2;
}

.tb-plus { margin-left: 12px; }
.tb-minus { margin-left: 19px; }
.tb-drop {
  width: 0;
  height: 0;
  border-left: 3px solid transparent;
  border-right: 3px solid transparent;
  border-top: 4px solid #444;
  align-self: flex-end;
  margin-bottom: 6px;
}
.tb-drop1 { margin-left: 2px; }
.tb-eye { margin-left: 11px; }
.tb-drop2 { margin-left: 3px; }

.rv-main {
  height: 865px;
  flex: none;
  display: flex;
}

.left {
  width: 513px;
  flex: none;
  display: flex;
  flex-direction: column;
}

.panel-head {
  height: 23px;
  flex: none;
  background: var(--panel-head);
  display: flex;
  align-items: center;
  gap: 6px;
  padding-left: 4px;
  position: relative;
}

.panel-close {
  position: absolute;
  right: 1px;
  top: 3px;
  width: 18px;
  height: 15px;
  background: #f4f2ef;
  border: 1px solid #aaa;
  border-radius: 3px;
  display: flex;
  align-items: center;
  justify-content: center;
}

.tree-wrap {
  height: 724px;
  flex: none;
  display: flex;
  background: #fff;
  border-bottom: 1px solid var(--border);
}

.tree {
  width: 499px;
  padding-top: 1px;
  flex: none;
}

.row {
  height: 19px;
  display: flex;
  line-height: 19px;
}

.row.selected {
  background: var(--select);
  color: #fff;
}

.name {
  width: 309px;
  flex: none;
  display: flex;
  align-items: center;
}

.l0 { padding-left: 5px; }
.l1 { padding-left: 24px; }

.exp {
  width: 10px;
  height: 10px;
  flex: none;
  position: relative;
}

.exp.shut::after {
  content: "";
  position: absolute;
  left: 3px;
  top: 1px;
  border-left: 5px solid #555;
  border-top: 4px solid transparent;
  border-bottom: 4px solid transparent;
}

.exp.open::after {
  content: "";
  position: absolute;
  left: 1px;
  top: 3px;
  border-top: 5px solid #555;
  border-left: 4px solid transparent;
  border-right: 4px solid transparent;
}

.ic { margin-left: 9px; flex: none; }
.ok { margin-left: 7px; flex: none; }

.l1 .lbl { margin-left: 9px; }
.l0 .lbl { margin-left: 5px; }
.l1 .lbl.st { margin-left: 10px; }

.blue {
  color: var(--blue);
  font-weight: bold;
}

.val {
  flex: 1;
  border-left: 1px solid #dcdcdc;
  padding-left: 2px;
  display: flex;
  align-items: center;
}

.selected .val { border-left-color: var(--select); }

.cb {
  width: 13px;
  height: 13px;
  margin: -3px 0 0 1px;
  border: 1px solid #c4c4c4;
  background: #fff;
  position: relative;
}

.cb.on::after {
  content: "";
  position: absolute;
  left: 3px;
  top: 0;
  width: 5px;
  height: 9px;
  border: solid #2f78c4;
  border-width: 0 2px 2px 0;
  transform: rotate(35deg);
}

.cb.dark::after { border-color: #222; }

.swatch {
  width: 13px;
  height: 13px;
  margin: 0 4px 0 4px;
  background: #f00;
  border: 1px solid #222;
}

.scrollbar {
  flex: 1;
  background: #f3f1ee;
  border-left: 1px solid #c4c2be;
  border-right: 1px solid #c4c2be;
  position: relative;
}

.sb-up, .sb-down {
  position: absolute;
  left: 3px;
  width: 0;
  height: 0;
  border-left: 4px solid transparent;
  border-right: 4px solid transparent;
}

.sb-up { top: 6px; border-bottom: 5px solid #555; }
.sb-down { bottom: 5px; border-top: 5px solid #555; }

.sb-thumb {
  position: absolute;
  left: 0;
  right: 0;
  top: 14px;
  height: 192px;
  background: #dfddd9;
}

.sb-thumb2 {
  position: absolute;
  left: 0;
  right: 0;
  top: 697px;
  height: 13px;
  background: #dfddd9;
}

.grip-h {
  height: 5px;
  flex: none;
  background: radial-gradient(circle, #bbb 0 .8px, transparent 1px) 242px 2px / 3px 3px no-repeat;
}

.desc {
  height: 78px;
  flex: none;
  background: #fff;
  border: 1px solid var(--border);
  padding: 5px 4px;
  line-height: 17px;
}

.btn-row {
  display: flex;
  gap: 6px;
  padding: 6px 1px 0 2px;
}

button {
  font-family: var(--ui-font);
  font-size: 15px;
  color: var(--text);
  border: 1px solid #b4b2ae;
  border-radius: 2px;
  background: linear-gradient(to bottom, #fbfaf8, #e9e7e3);
  height: 24px;
  flex: 1;
}

button:disabled {
  color: #a5a3a0;
  border-color: #cfcdc9;
  background: linear-gradient(to bottom, #f4f2ef, #ebe9e5);
}

.split {
  width: 23px;
  flex: none;
  display: flex;
  align-items: center;
  justify-content: flex-end;
  gap: 4px;
  padding-right: 5px;
}

.split-dots {
  width: 2px;
  height: 22px;
  background: repeating-linear-gradient(to bottom, #bbb 0 1px, transparent 1px 3px);
}

.split-arrow {
  width: 0;
  height: 0;
  border-right: 5px solid #555;
  border-top: 5px solid transparent;
  border-bottom: 5px solid transparent;
}

#view {
  width: 726px;
  height: 865px;
  display: block;
  flex: none;
}

.right-strip {
  flex: 1;
  background: #e4e1dd;
}

.grip-v {
  height: 7px;
  flex: none;
  background: radial-gradient(circle, #bbb 0 .8px, transparent 1px) center / 3px 3px no-repeat;
}

.time-head { height: 20px; gap: 6px; padding-left: 4px; }

.time-row {
  display: flex;
  align-items: center;
  margin-top: 9px;
  height: 24px;
  padding-left: 10px;
  flex: none;
  font-size: 14.7px;
}

.lbl-s { width: 76px; }
.lbl-w { width: 77px; }
.lbl-l { width: 96px; }

input {
  width: 141px;
  height: 24px;
  margin-right: 7px;
  font-family: var(--ui-font);
  font-size: 14.7px;
  color: var(--text);
  border: 1px solid #b4b2ae;
  border-radius: 2px;
  padding: 0 3px;
  background: #fff;
}

.reset-row {
  display: flex;
  align-items: flex-start;
  justify-content: space-between;
  margin-top: 11px;
  padding: 0 24px 0 1px;
}

.reset-row button {
  flex: none;
  width: 52px;
}

/* terminal */
.term {
  position: absolute;
  left: 1098px;
  top: 503px;
  width: 735px;
  height: 517px;
  display: flex;
  flex-direction: column;
  border-radius: 6px 6px 0 0;
  box-shadow: 0 4px 18px rgba(0,0,0,.55);
  background: #300a24;
}

.term-title {
  height: 31px;
  flex: none;
  background: linear-gradient(to bottom, #57554c, #45443e);
  border-radius: 6px 6px 0 0;
  color: #eeebe4;
  font-weight: bold;
  letter-spacing: .25px;
  display: flex;
  align-items: center;
  justify-content: center;
  position: relative;
}

.term-btns {
  position: absolute;
  right: 7px;
  display: flex;
  gap: 3px;
}

.tbtn {
  width: 17px;
  height: 17px;
  border-radius: 50%;
  background: #6b6a63;
  color: #35342f;
  display: flex;
  align-items: center;
  justify-content: center;
  font-weight: normal;
  font-size: 14px;
}

.tbtn-x { background: #e9622f; }

.term-menu {
  height: 24px;
  flex: none;
  background: #3e3d38;
  color: #e2e0da;
  display: flex;
  align-items: center;
  padding-left: 6px;
  gap: 13px;
}

.term-tabs {
  height: 27px;
  flex: none;
  background: #3e3d38;
  display: flex;
  align-items: stretch;
  gap: 3px;
  padding-left: 1px;
}

.tab {
  width: 225px;
  background: #a9a59f;
  color: #3c3b37;
  border-radius: 4px 4px 0 0;
  display: flex;
  align-items: center;
  justify-content: center;
  position: relative;
  font-size: 14.7px;
  padding: 1px 6px 0 0;
}

.tab-path { justify-content: flex-start; padding-left: 8px; }
.tab-on { background: #fff; width: 226px; }

.tab-x {
  position: absolute;
  right: 12px;
  font-size: 13px;
}

.tab-new { margin: 6px 0 0 6px; }
.tab-caret { align-self: center; margin-left: 9px; }

.term-body {
  flex: 1;
  position: relative;
  padding: 3px 0 0 1px;
  overflow: hidden;
}

pre {
  font-family: "Liberation Mono", monospace;
  font-size: 15px;
  line-height: 18px;
  color: #eeeeec;
}

.cursor {
  position: absolute;
  left: 0;
  top: 415px;
  width: 11px;
  height: 19px;
  border: 1px solid #eee;
}

.term-scroll {
  position: absolute;
  right: 0;
  top: 62px;
  bottom: 0;
  width: 5px;
  background: #c05a3a;
}
```

FILE: map.js
```javascript
// Occupancy grid drawn into the 3D view.
// Shapes are in map units: 3 units = 1 px. One cell is 11 units.
const canvas = document.getElementById("view");
const ctx = canvas.getContext("2d");

const VIEW_BG = "#5e6c6b";
const FREE = "#c0c0c0";
const WALL = "#101010";
const OX = 76;
const UPPER_Y = 262;
const LOWER_Y = 522;
const CELL = 11;

const upperFree = [[81,150],[130,205],[155,240],[245,330],[325,380],[400,430],[490,480],[530,505],[545,470],[545,415],[555,410],[565,295],[577,295],[577,240],[588,215],[620,215],[620,260],[632,262],[645,325],[655,325],[665,385],[690,390],[690,372],[705,345],[710,320],[725,295],[745,250],[770,220],[785,215],[785,248],[773,250],[773,340],[765,340],[765,490],[785,555],[1000,320],[1100,210],[1240,50],[1240,890],[69,890],[90,870],[115,855],[155,850],[170,830],[178,790],[170,765],[150,752],[115,755],[110,768],[81,768]];
const upperHoles = [
  [[555,500],[555,415],[565,350],[575,300],[587,240],[597,240],[597,295],[610,295],[622,415],[630,510],[600,512],[580,525],[558,525]],
  [[690,392],[712,345],[725,318],[740,295],[752,272],[748,295],[722,345],[718,395]]
];
const upperSpots = [[632,515,10,20],[598,525,10,20],[630,547,12,10],[660,470,15,30],[675,505,12,65],[720,505,12,40],[700,445,8,35],[732,438,10,32],[642,380,12,25],[655,425,10,10],[655,460,10,10],[775,525,10,30],[765,558,8,22],[598,802,10,10],[610,813,10,8],[102,205,12,10],[113,216,10,10],[147,260,10,10]];
const upperWalls = [
  [69,138,12,630],[57,293,12,10],[57,326,12,10],[57,348,12,10],[57,371,12,10],[57,404,12,10],[57,438,12,10],[48,471,21,10],[57,493,12,10],[57,546,12,10],[57,591,12,10],[57,636,12,10],[57,669,12,10],[57,702,12,10],
  [1240,42,8,855],[1236,732,12,165],[1248,570,12,10],[1248,680,12,10],[1248,835,12,10],
  [147,745,10,10],[157,757,25,10],[180,768,10,22],[180,790,20,32],[168,822,20,22],[157,845,12,10],
  [588,205,20,10],[600,195,10,20],[765,195,10,20],[765,205,20,10],[588,503,20,10],[588,492,10,20],[765,492,10,20],[765,503,20,10]
];

const lowerFree = [[225,96],[755,96],[755,140],[1000,130],[1005,275],[1020,285],[970,285],[930,297],[885,310],[895,345],[925,385],[960,410],[1000,440],[1040,455],[1040,470],[1000,480],[1000,610],[930,620],[200,625],[85,632],[85,345],[70,320],[70,150],[225,150]];
const lowerStrip = [[69,97],[225,97],[225,120],[69,120]];
const lowerSpots = [[840,318,11,11],[862,330,11,11],[873,341,11,11],[884,352,11,11],[862,363,11,11],[895,363,11,11],[906,375,11,11],[917,385,11,11],[940,429,11,11],[960,441,11,9]];
const lowerWalls = [
  [69,99,12,21],[90,99,45,11],[90,110,24,10],[125,110,10,10],[147,99,10,21],[157,110,25,10],[168,99,22,11],[200,110,35,10],[213,99,9,11],[222,99,12,42],
  [90,132,125,10],[69,141,153,12],[69,141,12,170],[57,306,24,12],[69,318,20,320],
  [85,330,83,10],[102,340,12,10],[85,528,95,12],
  [69,628,130,11],[200,615,730,12],[200,627,365,12],[576,627,54,12],[642,627,186,12],[840,627,54,12],[885,606,54,10],[951,606,54,10],
  [993,530,12,90],[1005,560,12,46],[1005,540,12,10],[996,495,10,36],[1005,450,12,30],[996,462,10,22],[1005,474,24,10],[1030,462,20,12],[1005,480,12,28],
  [894,507,12,9],[951,507,33,9],
  [753,109,495,11],[753,99,330,10],[1105,99,11,10],[1150,99,11,10],[1172,99,11,10],[1194,99,10,10],[1216,99,11,10],[1237,99,11,10],
  [753,120,250,12],[753,132,100,9],
  [996,120,9,155],[1005,145,12,8],[1005,178,12,8],[1005,210,12,42],[1005,252,24,14],[996,264,42,12]
];

function inside(pt, poly) {
  let hit = false;
  for (let i = 0, j = poly.length - 1; i < poly.length; j = i++) {
    const [xi, yi] = poly[i];
    const [xj, yj] = poly[j];
    if ((yi > pt[1]) !== (yj > pt[1]) && pt[0] < (xj - xi) * (pt[1] - yi) / (yj - yi) + xi) hit = !hit;
  }
  return hit;
}

function rect(x, y, w, h, top, color) {
  ctx.fillStyle = color;
  const x0 = Math.round(OX + x / 3);
  const y0 = Math.round(top + y / 3);
  ctx.fillRect(x0, y0, Math.round(OX + (x + w) / 3) - x0, Math.round(top + (y + h) / 3) - y0);
}

// fill the cells whose centre is inside the polygon
function fillCells(poly, top, color) {
  for (let y = 0; y < 900; y += CELL) {
    for (let x = 58; x < 1260; x += CELL) {
      if (inside([x + CELL / 2, y + CELL / 2], poly)) rect(x, y, CELL, CELL, top, color);
    }
  }
}

function drawGrid() {
  ctx.strokeStyle = "rgba(150,155,155,.55)";
  ctx.lineWidth = 1;
  ctx.beginPath();
  for (let i = 0; i < 9; i++) {
    const x = Math.round(117 + i * 73.5) + 0.5;
    ctx.moveTo(x, 0);
    ctx.lineTo(x, 555);
  }
  for (let i = 0; i < 8; i++) {
    const y = Math.round(40 + i * 73.5) + 0.5;
    ctx.moveTo(117, y);
    ctx.lineTo(726, y);
  }
  ctx.stroke();
  ctx.fillStyle = "#4a5655";
  ctx.fillRect(485, 180, 1, 5);
}

function drawRobot() {
  ctx.fillStyle = "#707070";
  ctx.beginPath();
  ctx.roundRect(OX + 112, LOWER_Y + 147, 13, 19, 5);
  ctx.roundRect(OX + 119, LOWER_Y + 146, 13, 21, 6);
  ctx.fill();
  ctx.fillStyle = "#505050";
  ctx.fillRect(OX + 120, LOWER_Y + 154, 6, 5);
  ctx.fillStyle = "#2a2a2a";
  ctx.fillRect(OX + 124, LOWER_Y + 167, 4, 1);
}

// laser returns along the walls: x0, y0, x1, y1, step
const hits = [
  [75,150,225,150,8],[72,155,72,300,12],[95,345,170,345,9],[78,345,76,630,9],[95,541,180,541,11],
  [85,634,560,634,4],[560,630,930,622,10],[770,135,990,135,14],[1000,125,1000,270,14],[1005,500,1005,605,14]
];

function drawHits() {
  ctx.fillStyle = "#a81818";
  hits.forEach(([x0, y0, x1, y1, step]) => {
    const n = Math.hypot(x1 - x0, y1 - y0) / step;
    for (let i = 0; i < n; i++) {
      const k = (i * 7) % 5;
      ctx.fillRect(Math.round(OX + (x0 + (x1 - x0) * i / n) / 3), Math.round(LOWER_Y + (y0 + (y1 - y0) * i / n) / 3 + (k - 2) * 0.5), 1, 1);
    }
  });
}

ctx.fillStyle = VIEW_BG;
ctx.fillRect(0, 0, canvas.width, canvas.height);

fillCells(upperFree, UPPER_Y, FREE);
upperHoles.forEach(h => fillCells(h, UPPER_Y, VIEW_BG));
upperSpots.forEach(s => rect(s[0], s[1], s[2], s[3], UPPER_Y, VIEW_BG));
fillCells(lowerFree, LOWER_Y, FREE);
fillCells(lowerStrip, LOWER_Y, FREE);
rect(81, 120, 134, 12, LOWER_Y, VIEW_BG);
lowerSpots.forEach(s => rect(s[0], s[1], s[2], s[3], LOWER_Y, VIEW_BG));
drawGrid();
upperWalls.forEach(w => rect(w[0], w[1], w[2], w[3], UPPER_Y, WALL));
lowerWalls.forEach(w => rect(w[0], w[1], w[2], w[3], LOWER_Y, WALL));
drawRobot();
drawHits();
```
